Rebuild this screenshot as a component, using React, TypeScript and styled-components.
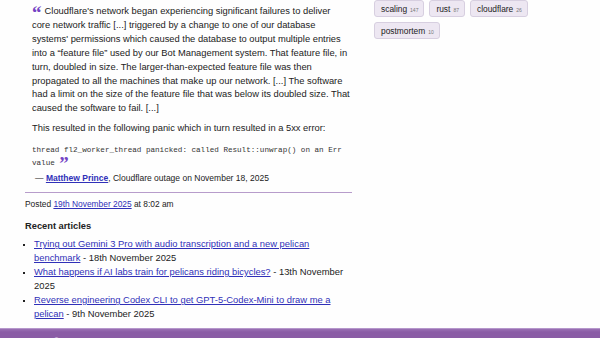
import React from "react";
import styled, { createGlobalStyle } from "styled-components";

const Global = createGlobalStyle`
  html, body { margin: 0; padding: 0; background: #fefefe; }
  body { font-family: "Liberation Sans", Arial, sans-serif; color: #222; }
`;

const Page = styled.div`
  width: 600px;
  height: 338px;
  overflow: hidden;
  display: flex;
  flex-direction: column;
`;

const Columns = styled.div`
  display: grid;
  grid-template-columns: 327px 200px;
  column-gap: 22px;
  padding-left: 25px;
`;

const Main = styled.div`
  display: flex;
  flex-direction: column;
`;

const Quote = styled.blockquote`
  margin: 5px 1px 0 7px;
  font-size: 9.35px;
  line-height: 13.9px;
`;

const QuoteP = styled.p`
  margin: 0 0 6px 0;
`;

const Mark = styled.span`
  display: inline-block;
  width: 10px;
  color: #7443c4;
  font-family: "Liberation Serif", "Times New Roman", serif;
  font-weight: bold;
  font-size: 19px;
  line-height: 0;
  vertical-align: -5px;
`;

const Code = styled.p`
  margin: 8px 0 0 0;
  font-family: "Liberation Mono", "Courier New", monospace;
  font-size: 7.6px;
  line-height: 13px;
  color: #333;
`;

const Cite = styled.p`
  margin: 2px 0 0 3px;
  font-size: 8.5px;
  line-height: 13px;
`;

const Link = styled.a<{ $bold?: boolean }>`
  color: #3030b8;
  text-decoration: underline;
  font-weight: ${(p) => (p.$bold ? "bold" : "normal")};
`;

const Rule = styled.hr`
  border: none;
  border-top: 1px solid #b79ccb;
  margin: 7px 0 0 0;
`;

const Posted = styled.p`
  margin: 5px 0 0 0;
  font-size: 8.4px;
  line-height: 13px;
`;

const Heading = styled.h3`
  margin: 9px 0 0 0;
  font-size: 9.3px;
  font-weight: bold;
  line-height: 13px;
`;

const List = styled.ul`
  margin: 4px 0 0 0;
  padding-left: 9px;
  font-size: 9.4px;
  line-height: 14px;
  list-style: square;
  li::marker { font-size: 7px; }
`;

const Item = styled.li`
  margin: 0;
`;

const Side = styled.div`
  display: flex;
  flex-wrap: wrap;
  align-content: flex-start;
  gap: 5px 5px;
`;

const Tag = styled.a`
  display: inline-flex;
  align-items: baseline;
  gap: 3px;
  height: 17px;
  box-sizing: border-box;
  padding: 3px 5px 0 6px;
  background: #ede7f2;
  border: 1px solid #d7cfe0;
  border-radius: 3px;
  font-size: 8.4px;
  color: #222;
  text-decoration: none;
`;

const Count = styled.span`
  font-size: 5px;
  color: #777;
`;

const Footer = styled.div`
  margin-top: 7px;
  flex-shrink: 0;
  background: linear-gradient(#9a70b4, #8a5ca5 3px);
  border-top: 1px solid #b596cb;
  color: #e8def0;
  font-size: 8px;
  line-height: 10px;
  padding: 7px 0 4px 8px;
  white-space: nowrap;
  word-spacing: 9px;
`;

const articles = [
  { title: "Trying out Gemini 3 Pro with audio transcription and a new pelican benchmark", date: "18th November 2025" },
  { title: "What happens if AI labs train for pelicans riding bicycles?", date: "13th November 2025" },
  { title: "Reverse engineering Codex CLI to get GPT-5-Codex-Mini to draw me a pelican", date: "9th November 2025" },
];

const tags = [
  { name: "scaling", count: 147 },
  { name: "rust", count: 87 },
  { name: "cloudflare", count: 26 },
  { name: "postmortem", count: 10 },
];

const years = [
  "Colophon", "©", "2002", "2003", "2004", "2005", "2006", "2007", "2008", "2009", "2010",
  "2011", "2012", "2013", "2014", "2015", "2016", "2017", "2018", "2019", "2020",
];

export default function App() {
  return (
    <Page>
      <Global />
      <Columns>
        <Main>
          <Quote>
            <QuoteP>
              <Mark>“</Mark> Cloudflare's network began experiencing significant failures to deliver core
              network traffic [...] triggered by a change to one of our database systems' permissions
              which caused the database to output multiple entries into a “feature file” used by our Bot
              Management system. That feature file, in turn, doubled in size. The larger-than-expected
              feature file was then propagated to all the machines that make up our network. [...] The
              software had a limit on the size of the feature file that was below its doubled size. That
              caused the software to fail. [...]
            </QuoteP>
            <QuoteP>This resulted in the following panic which in turn resulted in a 5xx error:</QuoteP>
            <Code>
              thread fl2_worker_thread panicked: called Result::unwrap() on an Err value <Mark>”</Mark>
            </Code>
            <Cite>
              — <Link $bold href="#">Matthew Prince</Link>, Cloudflare outage on November 18, 2025
            </Cite>
          </Quote>
          <Rule />
          <Posted>
            Posted <Link href="#">19th November 2025</Link> at 8:02 am
          </Posted>
          <Heading>Recent articles</Heading>
          <List>
            {articles.map((a) => (
              <Item key={a.title}>
                <Link href="#">{a.title}</Link> - {a.date}
              </Item>
            ))}
          </List>
        </Main>
        <Side>
          {tags.map((t) => (
            <Tag key={t.name} href="#">
              {t.name}
              <Count>{t.count}</Count>
            </Tag>
          ))}
        </Side>
      </Columns>
      <Footer>{years.join(" ")}</Footer>
    </Page>
  );
}
